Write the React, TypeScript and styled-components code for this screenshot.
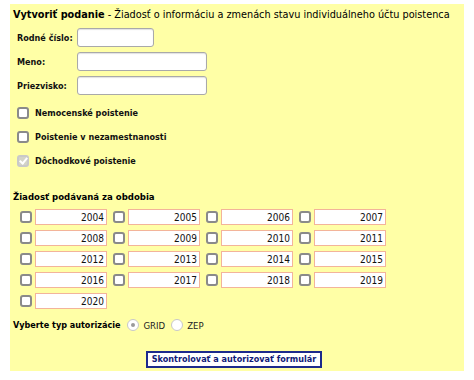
import React from "react";
import styled, { createGlobalStyle } from "styled-components";

const GlobalStyle = createGlobalStyle`
    body {
        margin: 0;
        background: #ffffff;
        font-family: "DejaVu Sans Condensed", Tahoma, Verdana, sans-serif;
    }
`;

const Panel = styled.form`
    margin: 4px 10px 0 10px;
    width: 454px;
    height: 367px;
    box-sizing: border-box;
    background: #ffffa6;
    padding: 4px 3px 0 3px;
    display: flex;
    flex-direction: column;
    color: #000;
`;

const Title = styled.div`
    font-size: 10.8px;
    line-height: 14px;
    white-space: nowrap;
`;

const TitleStrong = styled.b`
    font-weight: bold;
`;

const PersonGrid = styled.div`
    display: grid;
    grid-template-columns: 60px auto;
    row-gap: 5px;
    padding: 6px 0 0 4px;
    align-items: center;
`;

const Label = styled.label`
    font-size: 9px;
    font-weight: bold;
    color: #111;
    white-space: nowrap;
`;

const TextBox = styled.input<{ $w: number }>`
    width: ${(p) => p.$w}px;
    height: 19px;
    box-sizing: border-box;
    border: 1px solid #a9a9a9;
    border-radius: 3px;
    background: #fff;
    box-shadow: inset 0 1px 1px rgba(0, 0, 0, 0.12);
`;

const Check = styled.input.attrs({ type: "checkbox" })`
    appearance: none;
    margin: 0;
    width: 12px;
    height: 12px;
    box-sizing: border-box;
    border: 2px solid #8a8a8a;
    border-radius: 3px;
    background: #fff;
    flex: none;

    &:disabled:checked {
        border-color: #c9c9c9;
        background: #d4d4c8;
        position: relative;
    }
    &:disabled:checked::after {
        content: "";
        position: absolute;
        left: 2px;
        top: -1px;
        width: 3px;
        height: 6px;
        border: solid #fff;
        border-width: 0 2px 2px 0;
        transform: rotate(40deg);
    }
`;

const CheckList = styled.div`
    display: flex;
    flex-direction: column;
    gap: 12px;
    padding: 12px 0 0 4px;
`;

const CheckRow = styled.label`
    display: flex;
    align-items: center;
    gap: 6px;
    font-size: 9px;
    font-weight: bold;
    color: #111;
`;

const Heading = styled.div`
    font-size: 9.5px;
    font-weight: bold;
    padding: 24px 0 0 0;
`;

const YearGrid = styled.div`
    display: grid;
    grid-template-columns: repeat(4, 86px);
    column-gap: 7px;
    row-gap: 5px;
    padding: 7px 0 0 7px;
`;

const YearCell = styled.div`
    display: flex;
    align-items: center;
    gap: 3px;
`;

const YearBox = styled.input`
    width: 72px;
    height: 16px;
    box-sizing: border-box;
    border: 1px solid #f3b49a;
    background: #fff;
    text-align: right;
    font-family: "DejaVu Sans Condensed", Tahoma, sans-serif;
    font-size: 10px;
    padding: 0 2px;
    color: #111;
`;

const AuthRow = styled.div`
    display: flex;
    align-items: center;
    padding: 10px 0 0 0;
    font-size: 9px;
    font-weight: bold;
`;

const AuthLabel = styled.span`
    margin-right: 7px;
`;

const RadioLabel = styled.label`
    display: flex;
    align-items: center;
    gap: 4px;
    font-weight: normal;
    font-size: 9.5px;
    margin-right: 6px;
    color: #222;
`;

const Radio = styled.input.attrs({ type: "radio" })`
    appearance: none;
    margin: 0;
    width: 12px;
    height: 12px;
    border-radius: 50%;
    border: 1px solid #c8c8c8;
    background: #fff;
    position: relative;

    &:checked::after {
        content: "";
        position: absolute;
        left: 3px;
        top: 3px;
        width: 4px;
        height: 4px;
        border-radius: 50%;
        background: #9a9a9a;
    }
`;

const Footer = styled.div`
    display: flex;
    justify-content: center;
    padding: 20px 0 0 0;
`;

const SubmitButton = styled.button`
    height: 17px;
    padding: 0 4px;
    border: 2px solid #1c2a8c;
    background: #fff;
    color: #101a78;
    font-family: "DejaVu Sans Condensed", Tahoma, sans-serif;
    font-size: 9px;
    font-weight: bold;
    line-height: 13px;
    margin-left: -6px;
`;

const years = Array.from({ length: 17 }, (_, i) => 2004 + i);

export default function App() {
    return (
        <>
            <GlobalStyle />
            <Panel onSubmit={(e) => e.preventDefault()}>
                <Title>
                    <TitleStrong>Vytvoriť podanie</TitleStrong> - Žiadosť o informáciu a zmenách stavu individuálneho účtu poistenca
                </Title>

                <PersonGrid>
                    <Label>Rodné číslo:</Label>
                    <TextBox $w={77} />
                    <Label>Meno:</Label>
                    <TextBox $w={130} />
                    <Label>Priezvisko:</Label>
                    <TextBox $w={130} />
                </PersonGrid>

                <CheckList>
                    <CheckRow>
                        <Check />
                        Nemocenské poistenie
                    </CheckRow>
                    <CheckRow>
                        <Check />
                        Poistenie v nezamestnanosti
                    </CheckRow>
                    <CheckRow>
                        <Check defaultChecked disabled />
                        Dôchodkové poistenie
                    </CheckRow>
                </CheckList>

                <Heading>Žiadosť podávaná za obdobia</Heading>

                <YearGrid>
                    {years.map((y) => (
                        <YearCell key={y}>
                            <Check />
                            <YearBox defaultValue={y} readOnly />
                        </YearCell>
                    ))}
                </YearGrid>

                <AuthRow>
                    <AuthLabel>Vyberte typ autorizácie</AuthLabel>
                    <RadioLabel>
                        <Radio name="auth" defaultChecked />
                        GRID
                    </RadioLabel>
                    <RadioLabel>
                        <Radio name="auth" />
                        ZEP
                    </RadioLabel>
                </AuthRow>

                <Footer>
                    <SubmitButton type="submit">Skontrolovať a autorizovať formulár</SubmitButton>
                </Footer>
            </Panel>
        </>
    );
}
